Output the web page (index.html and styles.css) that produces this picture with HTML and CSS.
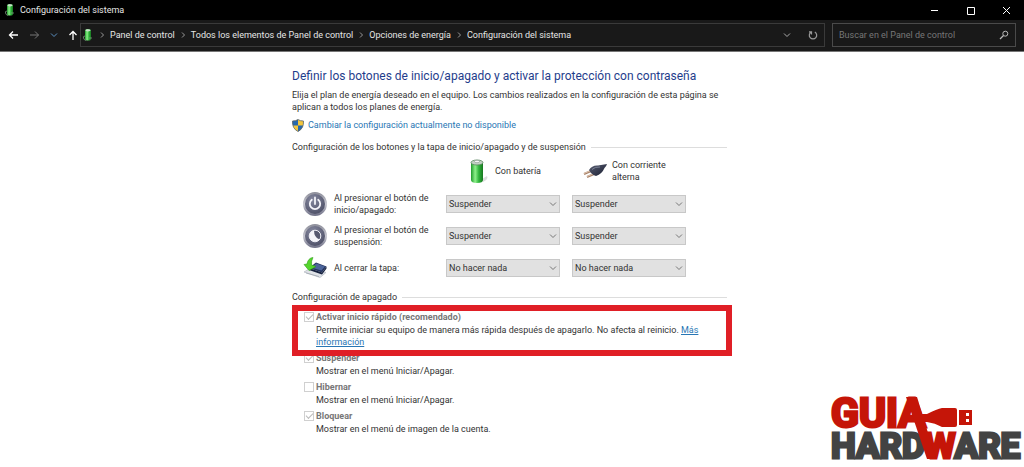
FILE: index.html
```html
<!DOCTYPE html>
<html lang="es">
<head>
    <meta charset="UTF-8">
    <meta name="viewport" content="width=device-width, initial-scale=1.0">
    <title>Configuración del sistema</title>
    <link rel="stylesheet" href="styles.css">
</head>
<body>

    <svg class="defs" width="0" height="0" aria-hidden="true">
        <defs>
            <linearGradient id="green" x1="0" x2="1" y1="0" y2="0">
                <stop offset="0" stop-color="#1f9a2c"/>
                <stop offset="0.35" stop-color="#8df08a"/>
                <stop offset="0.65" stop-color="#30b53c"/>
                <stop offset="1" stop-color="#17761f"/>
            </linearGradient>
            <radialGradient id="metal" cx="0.4" cy="0.3" r="0.8">
                <stop offset="0" stop-color="#85889f"/>
                <stop offset="1" stop-color="#46485f"/>
            </radialGradient>
            <linearGradient id="ring" x1="0" x2="0" y1="0" y2="1">
                <stop offset="0" stop-color="#8f909c"/>
                <stop offset="0.5" stop-color="#c9c9d2"/>
                <stop offset="1" stop-color="#73748a"/>
            </linearGradient>
            <linearGradient id="cable" x1="0" x2="1" y1="0" y2="1">
                <stop offset="0" stop-color="#5a6074"/>
                <stop offset="1" stop-color="#171b2e"/>
            </linearGradient>
            <symbol id="mini_battery" viewBox="0 0 12 14">
                <path d="M3 2.500Q3 1 6 1T9 2.500V11Q9 12.500 6 12.500T3 11Z" fill="url(#green)"/>
                <ellipse cx="6" cy="2.300" rx="2.600" ry="1.100" fill="#c8ddca"/>
                <path d="M3 8Q1 8 1.500 10Q2 12 4 12.500M7 10H10" fill="none" stroke="#7d9b80" stroke-width="0.800"/>
            </symbol>
            <symbol id="arrow_down" viewBox="0 0 8 8">
                <path d="M1 2.500L4 5.500L7 2.500" fill="none" stroke="currentColor"/>
            </symbol>
            <symbol id="arrow_right" viewBox="0 0 6 8">
                <path d="M2 1.500L4.500 4L2 6.500" fill="none" stroke="currentColor"/>
            </symbol>
        </defs>
    </svg>

    <header>
        <div class="title_bar">
            <svg width="12" height="14"><use href="#mini_battery"/></svg>
            <span class="title">Configuración del sistema</span>
            <button class="win_btn" aria-label="Minimizar"><svg width="9" height="9"><path d="M1 4.500H8" stroke="#fff"/></svg></button>
            <button class="win_btn" aria-label="Maximizar"><svg width="9" height="9"><path d="M1.500 1.500H8.500V8.500H1.500Z" fill="none" stroke="#fff"/></svg></button>
            <button class="win_btn" aria-label="Cerrar"><svg width="9" height="9"><path d="M1 1L8 8M8 1L1 8" stroke="#fff"/></svg></button>
        </div>
        <div class="nav_bar">
            <div class="nav_btns">
                <button aria-label="Atrás"><svg width="11" height="10"><path d="M10 5H1.500M5 1.500L1.500 5L5 8.500" fill="none" stroke="#fff" stroke-width="1.300"/></svg></button>
                <button aria-label="Adelante"><svg width="11" height="10"><path d="M1 5H9.500M6 1.500L9.500 5L6 8.500" fill="none" stroke="#777"/></svg></button>
                <button class="recent" aria-label="Recientes"><svg width="8" height="8"><use href="#arrow_down"/></svg></button>
                <button aria-label="Subir"><svg width="10" height="11"><path d="M5 10V1.500M1.500 5L5 1.500L8.500 5" fill="none" stroke="#fff" stroke-width="1.300"/></svg></button>
            </div>
            <nav class="address">
                <svg width="12" height="14"><use href="#mini_battery"/></svg>
                <svg class="sep" width="6" height="8"><use href="#arrow_right"/></svg>
                <a href="#">Panel de control</a>
                <svg class="sep" width="6" height="8"><use href="#arrow_right"/></svg>
                <a href="#">Todos los elementos de Panel de control</a>
                <svg class="sep" width="6" height="8"><use href="#arrow_right"/></svg>
                <a href="#">Opciones de energía</a>
                <svg class="sep" width="6" height="8"><use href="#arrow_right"/></svg>
                <a href="#">Configuración del sistema</a>
                <button class="history" aria-label="Ubicaciones anteriores"><svg width="8" height="8"><use href="#arrow_down"/></svg></button>
                <button aria-label="Actualizar"><svg width="10" height="10"><path d="M3.200 2A3.700 3.700 0 1 0 6.800 2M3.500 4.500V1.800H1" fill="none" stroke="#999" stroke-width="1.200"/></svg></button>
            </nav>
            <div class="search">
                <input type="text" placeholder="Buscar en el Panel de control" aria-label="Buscar en el Panel de control">
                <svg width="10" height="10"><circle cx="6.300" cy="3.700" r="2.500" fill="none" stroke="#bbb"/><path d="M4.500 5.500L1 9" stroke="#bbb" stroke-width="1.300"/></svg>
            </div>
        </div>
    </header>

    <main>
        <h1>Definir los botones de inicio/apagado y activar la protección con contraseña</h1>
        <p class="intro">Elija el plan de energía deseado en el equipo. Los cambios realizados en la configuración de esta página se aplican a todos los planes de energía.</p>
        <a class="admin" href="#">
            <svg width="12" height="13" viewBox="0 0 12 13">
                <path d="M6 0.500Q8 2 11.500 2Q12 9.500 6 12.500Q0 9.500 0.500 2Q4 2 6 0.500Z" fill="#f3c63d"/>
                <path d="M6 0.500Q4 2 0.500 2Q0.300 4.500 1 6.500H6ZM6 6.500H11Q10 10.500 6 12.500Z" fill="#2668ad"/>
                <path d="M6 0.500Q8 2 11.500 2Q12 9.500 6 12.500Q0 9.500 0.500 2Q4 2 6 0.500Z" fill="none" stroke="#59656f" stroke-width="0.800"/>
            </svg>
            Cambiar la configuración actualmente no disponible
        </a>

        <h2>Configuración de los botones y la tapa de inicio/apagado y de suspensión</h2>
        <div class="options">
            <div></div>
            <div class="source">
                <svg width="25" height="26" viewBox="0 0 25 26">
                    <path d="M17 21L22 18Q24 21 18 24Z" fill="#ddd"/>
                    <path d="M6 4.500V22Q6 25 12 25T18 22V4.500Z" fill="url(#green)"/>
                    <ellipse cx="12" cy="4.500" rx="6" ry="2.500" fill="#c2d0c3" stroke="#5d8661" stroke-width="0.800"/>
                    <ellipse cx="12" cy="3.500" rx="2.500" ry="1.200" fill="#f7f7f7" stroke="#75847a" stroke-width="0.500"/>
                </svg>
                <span>Con batería</span>
            </div>
            <div class="source">
                <svg width="25" height="26" viewBox="0 0 25 26">
                    <path d="M9 13L2 16M12 16L5 19" stroke="#a58068" stroke-width="2"/>
                    <path d="M9 12.500L2 15.500M12 15.500L5 18.500" stroke="#ecd2bb" stroke-width="0.800"/>
                    <path d="M7 12Q10 7 16 7.500L25 6Q24.500 8 22.500 10Q20 16 14 18Q12 18 9 15Z" fill="url(#cable)"/>
                    <path d="M10 11.500Q13 8.500 18 9" fill="none" stroke="#8d94a7" stroke-width="0.800"/>
                </svg>
                <span>Con corriente alterna</span>
            </div>

            <div class="action">
                <svg width="24" height="24" viewBox="0 0 24 24">
                    <circle cx="12" cy="12" r="11" fill="url(#metal)" stroke="url(#ring)" stroke-width="2"/>
                    <path d="M8.800 7.800A5.200 5.200 0 1 0 15.200 7.800M12 5.500V12" fill="none" stroke="#f4f4fa" stroke-width="1.800" stroke-linecap="round"/>
                </svg>
                <span id="power_label">Al presionar el botón de inicio/apagado:</span>
            </div>
            <div class="drop">
                <select aria-labelledby="power_label"><option>Suspender</option><option>Hibernar</option><option>No hacer nada</option></select>
                <svg width="8" height="8"><use href="#arrow_down"/></svg>
            </div>
            <div class="drop">
                <select aria-labelledby="power_label"><option>Suspender</option><option>Hibernar</option><option>No hacer nada</option></select>
                <svg width="8" height="8"><use href="#arrow_down"/></svg>
            </div>

            <div class="action">
                <svg width="24" height="24" viewBox="0 0 24 24">
                    <circle cx="12" cy="12" r="11" fill="url(#metal)" stroke="url(#ring)" stroke-width="2"/>
                    <circle cx="12" cy="12" r="5.800" fill="#f4f4fa"/>
                    <path d="M12 6.200A5.800 5.800 0 0 1 16.500 15.600Q11 13.500 11 6.300Z" fill="#565970"/>
                    <circle cx="12" cy="12" r="5.800" fill="none" stroke="#eeeef5"/>
                </svg>
                <span id="sleep_label">Al presionar el botón de suspensión:</span>
            </div>
            <div class="drop">
                <select aria-labelledby="sleep_label"><option>Suspender</option><option>Hibernar</option><option>No hacer nada</option></select>
                <svg width="8" height="8"><use href="#arrow_down"/></svg>
            </div>
            <div class="drop">
                <select aria-labelledby="sleep_label"><option>Suspender</option><option>Hibernar</option><option>No hacer nada</option></select>
                <svg width="8" height="8"><use href="#arrow_down"/></svg>
            </div>

            <div class="action">
                <svg width="24" height="24" viewBox="0 0 24 24">
                    <path d="M1 16L8 12L23 16.500L17 21.500Z" fill="#dfe2e7" stroke="#b3b9c2" stroke-width="0.700"/>
                    <path d="M3 17L16 20.500" stroke="#9299a5" stroke-width="0.600"/>
                    <path d="M6 12L13 6.500L23.500 10.500L19 16.500Z" fill="#24345f"/>
                    <path d="M8 11.500L13.500 7.500L22 10.500L18.500 14.500Z" fill="#4c659b"/>
                    <path d="M19 16.500L23.500 10.500V12.500L19 18.500L6 14V12Z" fill="#16213f"/>
                    <path d="M10 1.500Q5 2 4 8L1 8.500L6 14.500L13 10.500L8.500 9Q8 5 10 1.500Z" fill="#55d52d" stroke="#2d9d18" stroke-width="0.600"/>
                </svg>
                <span id="lid_label">Al cerrar la tapa:</span>
            </div>
            <div class="drop">
                <select aria-labelledby="lid_label"><option>No hacer nada</option><option>Suspender</option><option>Hibernar</option></select>
                <svg width="8" height="8"><use href="#arrow_down"/></svg>
            </div>
            <div class="drop">
                <select aria-labelledby="lid_label"><option>No hacer nada</option><option>Suspender</option><option>Hibernar</option></select>
                <svg width="8" height="8"><use href="#arrow_down"/></svg>
            </div>
        </div>

        <h2>Configuración de apagado</h2>
        <div class="shutdown">
            <div class="check">
                <input type="checkbox" id="fast" checked disabled>
                <label for="fast">Activar inicio rápido (recomendado)</label>
                <p>Permite iniciar su equipo de manera más rápida después de apagarlo. No afecta al reinicio. <a href="#">Más información</a></p>
            </div>
            <div class="check">
                <input type="checkbox" id="suspend" checked disabled>
                <label for="suspend">Suspender</label>
                <p>Mostrar en el menú Iniciar/Apagar.</p>
            </div>
            <div class="check">
                <input type="checkbox" id="hibernate" disabled>
                <label for="hibernate">Hibernar</label>
                <p>Mostrar en el menú Iniciar/Apagar.</p>
            </div>
            <div class="check">
                <input type="checkbox" id="lock" checked disabled>
                <label for="lock">Bloquear</label>
                <p>Mostrar en el menú de imagen de la cuenta.</p>
            </div>
            <div class="highlight"></div>
        </div>
    </main>

    <svg class="logo" width="194" height="80" viewBox="0 0 194 80" role="img" aria-label="Guia Hardware">
        <text class="logo_top" x="1" y="40">GUIA</text>
        <text class="logo_bottom" x="1" y="71">HARD<tspan class="red">W</tspan>ARE</text>
        <path class="red" d="M76 10H87L106 72H97Z"/>
        <path class="red" d="M91 27H97Q107 22 112 21H125Q127 21 127 23V38Q127 40 125 40H112Q105 36 97 35H91Z"/>
        <path class="red" fill-rule="evenodd" d="M129 23H142V38H129ZM136 26V29H139V26ZM136 32V35H139V32Z"/>
    </svg>

</body>
</html>
```

FILE: styles.css
```css
*{
    box-sizing: border-box;
}
body{
    margin: 0;
    background-color: #fff;
    color: #333;
    font-family: Roboto, "Open Sans", sans-serif;
    font-size: 9px;
    line-height: 12px;
}
button{
    display: flex;
    padding: 0;
    border: 0;
    background: none;
    color: inherit;
}
.defs{
    position: absolute;
}

/* window frame */
header{
    color: #e6e6e6;
    background-color: #191919;
    border-bottom: 1px solid #777;
}
.title_bar{
    display: flex;
    align-items: center;
    height: 20px;
    padding-left: 4px;
    background-color: #000;
}
.title{
    flex: 1;
    padding-left: 4px;
}
.win_btn{
    width: 36px;
    justify-content: center;
}
.nav_bar{
    display: flex;
    height: 31px;
    padding: 3px 8px 4px;
}
.nav_btns{
    display: flex;
    align-items: center;
    gap: 10px;
    width: 72px;
}
.nav_btns button{
    flex: none;
}
.recent{
    color: #5a8fc0;
}
.address{
    flex: 1;
    display: flex;
    align-items: center;
    gap: 5px;
    padding: 0 6px 0 1px;
    border: 1px solid #3a3a3a;
}
.address a{
    color: #e6e6e6;
    text-decoration: none;
}
.sep{
    color: #999;
}
.history{
    margin-left: auto;
    margin-right: 12px;
    color: #aaa;
}
.search{
    display: flex;
    align-items: center;
    width: 184px;
    margin-left: 7px;
    padding: 0 6px;
    border: 1px solid #4a4a4a;
}
.search input{
    flex: 1;
    min-width: 0;
    padding: 0;
    border: 0;
    background: none;
    font: inherit;
    color: #e6e6e6;
}
.search input::placeholder{
    color: #777;
}

/* page */
main{
    max-width: 440px;
    margin: 0 auto;
    padding-top: 16px;
}
h1{
    margin: 0;
    font-size: 12px;
    line-height: 16px;
    font-weight: normal;
    color: #1f3d8c;
}
.intro{
    margin: 5px 0;
}
.admin{
    display: flex;
    align-items: center;
    gap: 4px;
    height: 14px;
    color: #2876b4;
    text-decoration: none;
}
h2{
    display: flex;
    align-items: center;
    gap: 5px;
    margin: 9px 5px 0 0;
    font-size: 9px;
    font-weight: normal;
}
h2::after{
    content: "";
    flex: 1;
    height: 1px;
    background-color: #ddd;
}
.options{
    display: grid;
    grid-template-columns: 131px 114px 114px;
    column-gap: 12px;
    row-gap: 8px;
    align-items: center;
    padding: 5px 0 2px 11px;
}
.source{
    display: flex;
    align-items: center;
    justify-content: center;
    gap: 5px;
    padding: 0 10px;
}
.source svg, .action svg{
    flex: none;
}
.action{
    display: flex;
    align-items: center;
    gap: 7px;
}
.drop{
    position: relative;
    height: 18px;
}
.drop select{
    appearance: none;
    width: 100%;
    height: 100%;
    padding: 0 2px;
    border: 1px solid #c8c8c8;
    border-radius: 0;
    background-color: #e1e1e1;
    color: #333;
    font: inherit;
}
.drop svg{
    position: absolute;
    right: 3px;
    top: 5px;
    color: #777;
    pointer-events: none;
}

/* checkboxes */
.shutdown{
    position: relative;
    padding: 8px 12px 0;
}
.check{
    display: grid;
    grid-template-columns: 10px 1fr;
    column-gap: 2px;
    row-gap: 1px;
    align-items: center;
    margin-bottom: 4px;
}
.check input{
    appearance: none;
    width: 10px;
    height: 10px;
    margin: 0;
    border: 1px solid #d0d0d0;
    background-color: #fff;
}
.check input:checked::before{
    content: "";
    display: block;
    width: 6px;
    height: 3px;
    margin: 1px;
    border-left: 1px solid #bbb;
    border-bottom: 1px solid #bbb;
    transform: rotate(-45deg);
}
.check label{
    font-weight: bold;
    color: #777;
}
.check p{
    grid-column: 2;
    margin: 0;
}
.check a{
    color: #2876b4;
}
.highlight{
    position: absolute;
    top: 2px;
    left: 0;
    width: 100%;
    height: 51px;
    border: 6px solid #e01f26;
}

/* brand mark */
.logo{
    position: absolute;
    right: 0;
    bottom: 0;
}
.logo text{
    font-family: Roboto, sans-serif;
    font-weight: bold;
    stroke-width: 3px;
}
.logo_top{
    font-size: 41px;
}
.logo_bottom{
    font-size: 35px;
    fill: #434343;
    stroke: #434343;
}
.logo_top, .logo .red{
    fill: #c51508;
}
.logo_top, .logo tspan{
    stroke: #c51508;
}
```
